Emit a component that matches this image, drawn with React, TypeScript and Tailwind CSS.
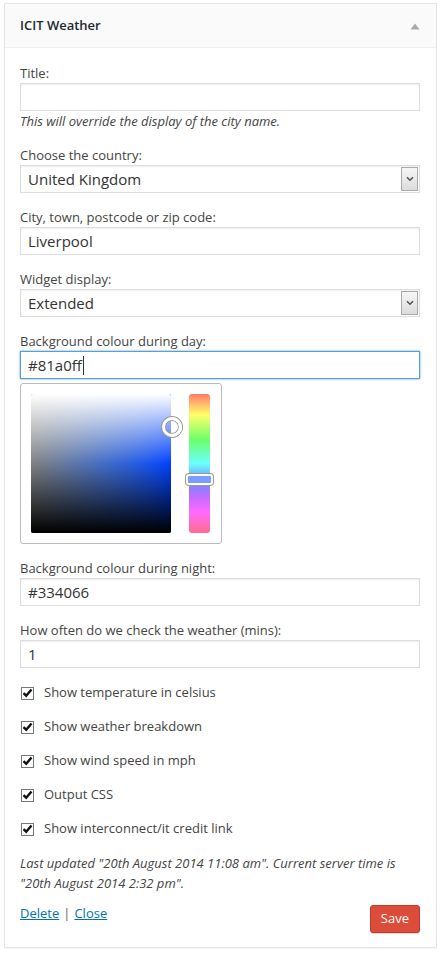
import React from 'react';

const Label: React.FC<{ children: React.ReactNode }> = ({ children }) => (
  <label className="block text-[13px] leading-[18px] text-[#444] mb-px">{children}</label>
);

const TextInput: React.FC<{ value: string; focused?: boolean }> = ({ value, focused }) => (
  <div
    className={
      focused
        ? 'h-7 flex items-center px-[7px] bg-white border border-[#5b9dd9] shadow-[0_0_2px_rgba(30,140,190,0.8)] text-[15px] text-[#333]'
        : 'h-7 flex items-center px-[7px] bg-white border border-[#ddd] shadow-[inset_0_1px_2px_rgba(0,0,0,0.07)] text-[15px] text-[#333]'
    }
  >
    <span>{value}</span>
    {focused && <span className="w-px h-[19px] bg-[#333] ml-px" />}
  </div>
);

const SelectBox: React.FC<{ value: string }> = ({ value }) => (
  <div className="h-7 flex items-center justify-between pl-[7px] pr-px bg-white border border-[#ddd] shadow-[inset_0_1px_2px_rgba(0,0,0,0.07)] text-[15px] text-[#333]">
    <span>{value}</span>
    <span className="w-[17px] h-[24px] flex items-center justify-center border border-[#aaa] bg-gradient-to-b from-[#f6f6f6] to-[#dcdcdc]">
      <svg width="8" height="6" viewBox="0 0 8 6">
        <path d="M1 1.2 L4 4.2 L7 1.2" fill="none" stroke="#555" strokeWidth="1.6" />
      </svg>
    </span>
  </div>
);

const Check: React.FC<{ label: string }> = ({ label }) => (
  <div className="flex items-center h-[18px] mb-4 text-[13px] text-[#444]">
    <span className="ml-px w-[13px] h-[13px] border border-[#777] bg-white flex items-center justify-center">
      <svg width="11" height="10" viewBox="0 0 11 10">
        <path d="M1.5 5.2 L4.2 7.8 L9.5 1.5" fill="none" stroke="#111" strokeWidth="2.4" />
      </svg>
    </span>
    <span className="ml-[10px]">{label}</span>
  </div>
);

// iris-style picker: saturation across, lightness down
const ColourPicker: React.FC = () => (
  <div className="relative w-[202px] h-[161px] mt-[4px] border border-[#bbb] rounded-[3px] bg-white">
    <div className="absolute left-[10px] top-[10px] w-[140px] h-[139px] rounded-[2px] overflow-hidden bg-gradient-to-r from-[#808080] to-[#0040ff]">
      <div className="absolute inset-0 bg-[linear-gradient(to_bottom,#ffffff_0%,rgba(255,255,255,0)_50%,rgba(0,0,0,0)_50%,#000000_100%)]" />
    </div>
    <div className="absolute left-[141px] top-[33px] w-[20px] h-[20px] rounded-full border-[3px] border-white shadow-[0_0_0_1px_#999,inset_0_0_0_1px_#999]" />
    <div className="absolute left-[168px] top-[10px] w-[21px] h-[139px] rounded-[3px] bg-[linear-gradient(to_bottom,#ff7b6b_0%,#ffff6b_15%,#6bff6b_33%,#6bffff_50%,#6b8cff_63%,#c86bff_75%,#ff6bff_85%,#ff6b8c_100%)]" />
    <div className="absolute left-[165px] top-[90px] w-[27px] h-[11px] rounded-[3px] border-2 border-white bg-[#7a9cff] shadow-[0_0_0_1px_#999]" />
  </div>
);

export default function App() {
  return (
    <div className="min-h-[953px] bg-white pt-[3px] pl-[4px] pr-[5px]" style={{ fontFamily: '"Open Sans", "Liberation Sans", sans-serif' }}>
      <div className="border border-[#e5e5e5] shadow-[0_1px_1px_rgba(0,0,0,0.04)] bg-white">
        <div className="h-[44px] flex items-center justify-between pl-[15px] pr-[16px] bg-[#fafafa] border-b border-[#eee]">
          <h3 className="text-[13px] font-semibold text-[#23282d]">ICIT Weather</h3>
          <svg width="10" height="7" viewBox="0 0 10 7" className="mt-px">
            <path d="M5 0.5 L9.5 6.5 L0.5 6.5 Z" fill="#aaa" />
          </svg>
        </div>

        <div className="pt-4 pl-[15px] pr-[16px] pb-[14px]">
          <div className="mb-[15px]">
            <Label>Title:</Label>
            <TextInput value="" />
            <p className="text-[13px] leading-[19px] italic text-[#444] mt-px">This will override the display of the city name.</p>
          </div>

          <div className="mb-[15px]">
            <Label>Choose the country:</Label>
            <SelectBox value="United Kingdom" />
          </div>

          <div className="mb-[15px]">
            <Label>City, town, postcode or zip code:</Label>
            <TextInput value="Liverpool" />
          </div>

          <div className="mb-[15px]">
            <Label>Widget display:</Label>
            <SelectBox value="Extended" />
          </div>

          <div className="mb-[15px]">
            <Label>Background colour during day:</Label>
            <TextInput value="#81a0ff" focused />
            <ColourPicker />
          </div>

          <div className="mb-[15px]">
            <Label>Background colour during night:</Label>
            <TextInput value="#334066" />
          </div>

          <div className="mb-[16px]">
            <Label>How often do we check the weather (mins):</Label>
            <TextInput value="1" />
          </div>

          <Check label="Show temperature in celsius" />
          <Check label="Show weather breakdown" />
          <Check label="Show wind speed in mph" />
          <Check label="Output CSS" />
          <Check label="Show interconnect/it credit link" />

          <p className="text-[13px] leading-[20px] italic text-[#444] -mt-px">
            Last updated "20th August 2014 11:08 am". Current server time is "20th August 2014 2:32 pm".
          </p>

          <div className="flex justify-between items-start mt-[11px]">
            <div className="text-[13px] text-[#444] leading-[18px]">
              <a className="text-[#0073aa] underline">Delete</a>
              <span className="mx-[4px] text-[#666]">|</span>
              <a className="text-[#0073aa] underline">Close</a>
            </div>
            <button className="mt-[1px] h-7 px-[10px] rounded-[3px] bg-[#dd4b39] border border-[#c43a2a] text-white text-[13px] shadow-[0_1px_0_rgba(0,0,0,0.15)]">
              Save
            </button>
          </div>
        </div>
      </div>
    </div>
  );
}
